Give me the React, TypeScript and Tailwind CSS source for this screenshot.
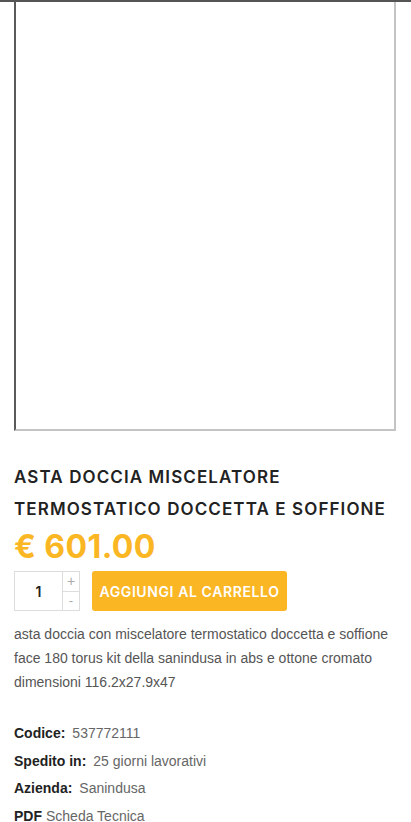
import { useState } from "react";

const DETAILS: { label: string; value: string }[] = [
  { label: "Codice:", value: "537772111" },
  { label: "Spedito in:", value: "25 giorni lavorativi" },
  { label: "Azienda:", value: "Sanindusa" },
];

export default function App() {
  const [qty, setQty] = useState(1);

  return (
    <div className="min-h-[822px] w-[411px] overflow-hidden bg-white">
      <div className="h-[2px] w-full bg-[#555]" />
      {/* product frame */}
      <div className="ml-[14px] h-[429px] w-[382px] border-2 border-t-0 border-l-[#5a5a5a] border-r-[#c4c4c4] border-b-[#c4c4c4] bg-white" />

      <div className="px-[14px] pt-[30px]">
        <h1 className="font-['Inter',sans-serif] text-[17px] font-semibold uppercase leading-[32px] tracking-[1.1px] text-[#222]">
          Asta doccia miscelatore termostatico doccetta e soffione
        </h1>
        <div className="mt-[2px] font-['Inter',sans-serif] text-[32px] font-bold leading-[40px] tracking-[0.4px] text-[#fbb623]">
          € 601.00
        </div>

        <div className="mt-[4px] flex items-center gap-3">
          <div className="flex h-[40px] w-[66px] border border-[#ddd]">
            <div className="flex flex-1 items-center justify-center font-['Inter',sans-serif] text-[14px] font-semibold text-[#222]">
              {qty}
            </div>
            <div className="flex w-[17px] flex-col border-l border-[#ddd] text-[#aaa]">
              <button
                className="flex flex-1 items-center justify-center border-b border-[#ddd] font-['Liberation_Sans',sans-serif] text-[14px] leading-none"
                onClick={() => setQty((q) => q + 1)}
              >
                +
              </button>
              <button
                className="flex flex-1 items-center justify-center font-['Liberation_Sans',sans-serif] text-[13px] leading-none"
                onClick={() => setQty((q) => Math.max(1, q - 1))}
              >
                -
              </button>
            </div>
          </div>
          <button className="h-[40px] w-[195px] rounded-[3px] bg-[#fbb623] font-['Inter',sans-serif] text-[14px] font-semibold uppercase tracking-[0.6px] text-white">
            Aggiungi al carrello
          </button>
        </div>

        <p className="mt-[11px] font-['Liberation_Sans',Arial,sans-serif] text-[14px] leading-[24px] text-[#555]">
          asta doccia con miscelatore termostatico doccetta e soffione face 180 torus kit della sanindusa in abs e ottone cromato dimensioni 116.2x27.9x47
        </p>

        <div className="mt-[29px] flex flex-col gap-[7.5px] font-['Liberation_Sans',Arial,sans-serif] text-[14px] leading-[20px]">
          {DETAILS.map((d) => (
            <div key={d.label}>
              <span className="font-bold text-[#222]">{d.label}</span>
              <span className="ml-[7px] text-[#666]">{d.value}</span>
            </div>
          ))}
          <div>
            <span className="font-bold text-[#222]">PDF</span>
            <span className="ml-[4px] text-[#666]">Scheda Tecnica</span>
          </div>
        </div>
      </div>
    </div>
  );
}
